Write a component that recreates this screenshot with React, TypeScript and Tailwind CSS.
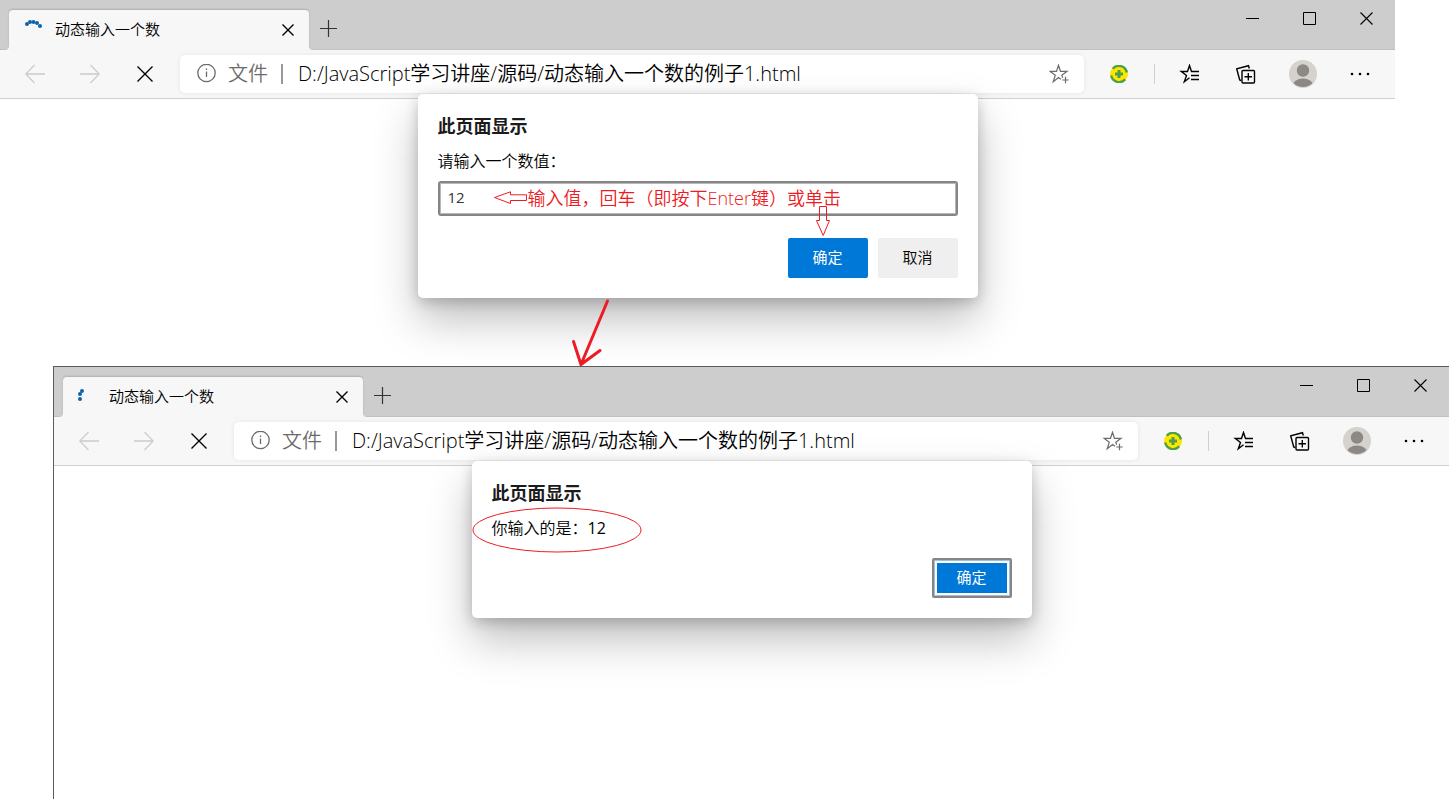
import type { ReactNode } from "react"

const stroke = { fill: "none", stroke: "currentColor" }

function Spinner({ dots }: { dots: number[][] }) {
    return (
        <svg width="20" height="20" viewBox="0 0 20 20" fill="#0a63ad">
            {dots.map(([x, y]) => (
                <circle key={x + "-" + y} cx={x} cy={y} r="2" />
            ))}
        </svg>
    )
}

function BackIcon() {
    return (
        <svg width="20" height="20" viewBox="0 0 20 20" {...stroke} strokeWidth="1.3">
            <path d="M20 10H1M9.5 1L.8 10l8.700 9" />
        </svg>
    )
}

function ForwardIcon() {
    return (
        <svg width="20" height="20" viewBox="0 0 20 20" {...stroke} strokeWidth="1.3">
            <path d="M0 10h19M10.500 1l8.700 9-8.700 9" />
        </svg>
    )
}

function CrossIcon({ size, width }: { size: number; width: number }) {
    return (
        <svg width={size} height={size} viewBox={`0 0 ${size} ${size}`} {...stroke} strokeWidth={width}>
            <path d={`M.5.5L${size - 0.5} ${size - 0.5}M${size - 0.5}.5L.5 ${size - 0.5}`} />
        </svg>
    )
}

function InfoIcon() {
    return (
        <svg width="20" height="20" viewBox="0 0 20 20" {...stroke} strokeWidth="1.3">
            <circle cx="9.500" cy="9" r="8.700" />
            <path d="M9.500 7.500v5.500M9.500 4.500v1.600" />
        </svg>
    )
}

function StarAddIcon() {
    return (
        <svg width="20" height="20" viewBox="0 0 20 20" {...stroke} strokeWidth="1.2">
            <path d="M12 15.300L9.500 13.600 4.200 17.800l2.100-6.600L1 7.300h6.500l2-6 2 6H18l-5.200 3.900.9 2.600M16.500 12.800v6.400M13.300 16h6.400" />
        </svg>
    )
}

function FavoritesIcon() {
    return (
        <svg width="20" height="20" viewBox="0 0 20 20" {...stroke} strokeWidth="1.4">
            <path d="M12.500 7.500l-2-6-2 6H2.300l5.200 3.900-2.200 6.400 5.200-4.100M12 7.500h8M12 11.500h8M12 15.500h8" />
        </svg>
    )
}

function CollectionsIcon() {
    return (
        <svg width="20" height="20" viewBox="0 0 20 20" {...stroke} strokeWidth="1.4">
            <rect x="6" y="6.500" width="12.500" height="12.500" rx="1" />
            <path d="M12.300 9v7.500M8.500 12.800h7.500M13.300 4.500L12.500 1.700.7 4.800l3 11.200 1.500.5" />
        </svg>
    )
}

function ExtensionIcon() {
    return (
        <svg width="18" height="18" viewBox="0 0 18 18">
            <circle cx="9" cy="9" r="9" fill="#ffe600" />
            <path d="M2.800 3.800A8 8 0 0 1 16.800 7.500M15.200 14.200A8 8 0 0 1 1.200 10.500" fill="none" stroke="#4da04a" strokeWidth="2.4" />
            <path d="M9 5v8M5 9h8" stroke="#4da04a" strokeWidth="3" />
        </svg>
    )
}

function AvatarIcon() {
    return (
        <svg width="28" height="28" viewBox="0 0 28 28">
            <clipPath id="avatar">
                <circle cx="14" cy="14" r="13" />
            </clipPath>
            <circle cx="14" cy="14" r="14" fill="#d5d2ce" />
            <circle cx="14" cy="10.500" r="6.200" fill="#8d8884" />
            <ellipse cx="14" cy="26" rx="10.500" ry="7.500" fill="#8d8884" clipPath="url(#avatar)" />
        </svg>
    )
}

function ToolButton({ label, children }: { label: string; children: ReactNode }) {
    return (
        <button aria-label={label} className="flex h-10 w-10 shrink-0 items-center justify-center">
            {children}
        </button>
    )
}

type BrowserProps = {
    id: string
    dots: number[][]
    className: string
    children: ReactNode
}

function Browser({ id, dots, className, children }: BrowserProps) {
    return (
        <section className={"relative bg-white " + className}>
            <header className="flex h-[50px] items-end border-b border-[#c0c0c0] bg-[#cdcdcd] pl-[9px]">
                <div className="relative -mb-px flex h-10 w-[300px] items-center rounded-t-[4px] bg-[#f7f7f7] pr-[15px] pl-[15px] shadow-[0_-1px_2px_rgba(0,0,0,0.15)]">
                    <svg className="absolute bottom-0 -left-1" width="4" height="4">
                        <path d="M0 4Q4 4 4 0V4Z" fill="#f7f7f7" />
                    </svg>
                    <svg className="absolute -right-1 bottom-0" width="4" height="4">
                        <path d="M4 4Q0 4 0 0V4Z" fill="#f7f7f7" />
                    </svg>
                    <Spinner dots={dots} />
                    <span className="ml-[11px] flex-1 pb-0.5 text-[15px] font-[350]">动态输入一个数</span>
                    <button aria-label="关闭标签页">
                        <CrossIcon size={12} width={1.4} />
                    </button>
                </div>
                <button aria-label="新建标签页" className="flex h-10 w-[38px] items-center justify-center pb-0.5 text-[#333]">
                    <svg width="18" height="18" viewBox="0 0 18 18" {...stroke}>
                        <path d="M9.500 1v17M1 9.500h17" strokeWidth="1.200" />
                    </svg>
                </button>
                <div className="ml-auto flex self-start">
                    <button aria-label="最小化" className="flex h-[37px] w-[57px] items-center justify-center">
                        <svg width="13" height="13" {...stroke}>
                            <path d="M0 6.500h13" />
                        </svg>
                    </button>
                    <button aria-label="最大化" className="flex h-[37px] w-[57px] items-center justify-center">
                        <svg width="13" height="13" {...stroke}>
                            <path d="M.5.5h12v12H.5z" />
                        </svg>
                    </button>
                    <button aria-label="关闭" className="flex h-[37px] w-[57px] items-center justify-center">
                        <CrossIcon size={13} width={1.1} />
                    </button>
                </div>
            </header>
            <nav className="flex h-[49px] items-center border-b border-[#d0d0d0] bg-[#f7f7f7] px-[15px]">
                <div className="mr-[15px] flex gap-[15px]">
                    <span className="flex text-[#ccc]">
                        <ToolButton label="后退"><BackIcon /></ToolButton>
                    </span>
                    <span className="flex text-[#ccc]">
                        <ToolButton label="前进"><ForwardIcon /></ToolButton>
                    </span>
                    <ToolButton label="停止"><CrossIcon size={16} width={1.4} /></ToolButton>
                </div>
                <div className="flex h-[38px] min-w-0 flex-1 items-center rounded-[5px] bg-white pr-[15px] pl-[17px] text-xl text-[#6c6c6c] shadow-[0_0_4px_rgba(0,0,0,0.08)]">
                    <InfoIcon />
                    <label htmlFor={id} className="ml-[11px] font-[350] whitespace-nowrap">文件</label>
                    <span className="mr-[15px] ml-[13px] h-5 w-0.5 bg-[#999]" />
                    <input
                        id={id}
                        className="min-w-0 flex-1 font-[350] text-black outline-none"
                        defaultValue="D:/JavaScript学习讲座/源码/动态输入一个数的例子1.html"
                    />
                    <button aria-label="添加到收藏夹"><StarAddIcon /></button>
                </div>
                <div className="ml-[15px] flex items-center">
                    <ToolButton label="扩展"><ExtensionIcon /></ToolButton>
                    <span className="mr-[14px] ml-[15px] h-5 w-px bg-[#d0d0d0]" />
                    <div className="flex gap-[17px]">
                        <ToolButton label="收藏夹"><FavoritesIcon /></ToolButton>
                        <ToolButton label="集锦"><CollectionsIcon /></ToolButton>
                        <ToolButton label="用户"><AvatarIcon /></ToolButton>
                        <ToolButton label="设置及其他">
                            <svg width="20" height="4" fill="currentColor">
                                <circle cx="2" cy="2" r="1.300" />
                                <circle cx="10" cy="2" r="1.300" />
                                <circle cx="18" cy="2" r="1.300" />
                            </svg>
                        </ToolButton>
                    </div>
                </div>
            </nav>
            {children}
        </section>
    )
}

function Dialog({ children }: { children: ReactNode }) {
    return (
        <div role="dialog" className="relative mx-auto -mt-[5px] w-[560px] rounded-[5px] bg-white p-5 shadow-[0_22px_44px_rgba(0,0,0,0.25),0_4px_14px_rgba(0,0,0,0.2)]">
            <h2 className="text-lg leading-6 font-bold text-[#1b1b1b]">此页面显示</h2>
            {children}
        </div>
    )
}

export default function App() {
    return (
        <main className="flex min-h-screen flex-col overflow-hidden bg-white font-[Open_Sans,Noto_Sans_CJK_SC,sans-serif] text-black">
            <Browser
                id="url-input"
                className="mr-[54px] pb-[68px]"
                dots={[[3, 4], [6, 2], [9.5, 2], [13, 3], [16, 6]]}
            >
                <Dialog>
                    <label htmlFor="value" className="mt-[11px] mb-2 block text-base leading-6 font-[350]">请输入一个数值：</label>
                    <div className="relative">
                        <input
                            id="value"
                            className="block h-[35px] w-full rounded-[3px] border-2 border-[#858585] px-2 pb-1 text-[15px] text-[#333] shadow-[inset_0_0_0_1px_#b8b8b8] outline-none"
                            defaultValue="12"
                        />
                        <svg className="absolute top-[10px] left-[56px] text-[#ed1c24]" width="33" height="14" {...stroke}>
                            <path d="M.5 6.500L16.500.8v3H32.500v5.700H16.500v3z" />
                        </svg>
                        <span className="absolute top-1 left-[90px] text-lg leading-[26px] font-[350] whitespace-nowrap text-[#ed1c24]">
                            输入值，回车（即按下Enter键）或单击
                        </span>
                        <svg className="absolute top-[25px] left-[378px] text-[#ed1c24]" width="15" height="31" {...stroke}>
                            <path d="M3.500.5h7v14h3L7.200 29.500.5 14.500h3z" />
                        </svg>
                    </div>
                    <div className="mt-[22px] flex justify-end gap-[10px] text-[15px]">
                        <button className="h-10 w-20 rounded-[2px] bg-[#0078d7] pb-0.5 text-white">确定</button>
                        <button className="h-10 w-20 rounded-[2px] bg-[#efefef] pb-0.5 font-[350]">取消</button>
                    </div>
                    <svg className="absolute top-[204px] left-[152px] text-[#ed1c24]" width="42" height="70" {...stroke}>
                        <path d="M37.500 3L11 66.500M3.500 43.500L11 66.500 30 52.500" strokeWidth="3" strokeLinecap="round" />
                    </svg>
                </Dialog>
            </Browser>
            <Browser
                id="url-result"
                className="ml-[53px] flex-1 border-t border-l border-[#5c5c5c]"
                dots={[[4, 4], [2, 7], [2, 12]]}
            >
                <Dialog>
                    <p className="mt-[11px] mb-[18px] text-base leading-6 font-[350]">
                        你输入的是：<span className="font-normal">12</span>
                    </p>
                    <svg className="absolute top-[46px] left-0 text-[#ed1c24]" width="170" height="47" {...stroke}>
                        <ellipse cx="85" cy="23" rx="84" ry="22" />
                    </svg>
                    <div className="flex justify-end text-[15px]">
                        <button className="h-10 w-20 rounded-[2px] border-2 border-[#858585] bg-[#0078d7] pb-0.5 text-white shadow-[inset_0_0_0_1px_#9fc0dc,inset_0_0_0_3px_white]">
                            确定
                        </button>
                    </div>
                </Dialog>
            </Browser>
        </main>
    )
}
